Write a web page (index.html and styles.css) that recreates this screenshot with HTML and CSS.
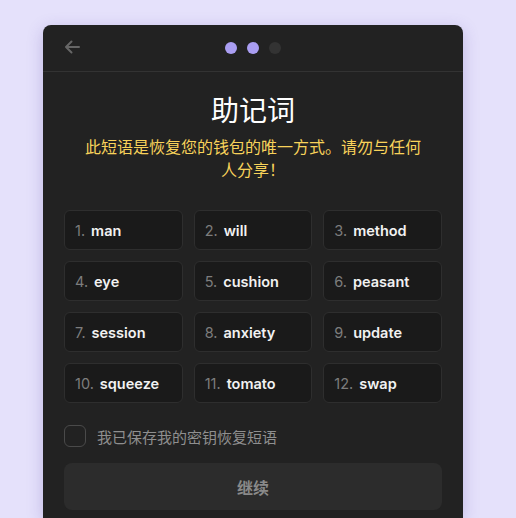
FILE: index.html
```html
<!DOCTYPE html>
<html lang="zh">
<head>
<meta charset="utf-8">
<link rel="stylesheet" href="styles.css">
</head>
<body>
<div class="card">
  <div class="header">
    <button class="back" aria-label="返回">
      <svg width="16" height="14" viewBox="0 0 16 14"><path d="M15 7H2M7.5 1.5L2 7l5.5 5.5" fill="none" stroke="#666" stroke-width="2" stroke-linecap="round" stroke-linejoin="round"/></svg>
    </button>
    <div class="dots">
      <span class="dot on"></span><span class="dot on"></span><span class="dot"></span>
    </div>
  </div>
  <div class="body">
    <h1 class="title">助记词</h1>
    <p class="subtitle">此短语是恢复您的钱包的唯一方式。请勿与任何人分享！</p>
    <div class="grid">
      <div class="word"><span class="num">1.</span><span class="txt">man</span></div>
      <div class="word"><span class="num">2.</span><span class="txt">will</span></div>
      <div class="word"><span class="num">3.</span><span class="txt">method</span></div>
      <div class="word"><span class="num">4.</span><span class="txt">eye</span></div>
      <div class="word"><span class="num">5.</span><span class="txt">cushion</span></div>
      <div class="word"><span class="num">6.</span><span class="txt">peasant</span></div>
      <div class="word"><span class="num">7.</span><span class="txt">session</span></div>
      <div class="word"><span class="num">8.</span><span class="txt">anxiety</span></div>
      <div class="word"><span class="num">9.</span><span class="txt">update</span></div>
      <div class="word"><span class="num">10.</span><span class="txt">squeeze</span></div>
      <div class="word"><span class="num">11.</span><span class="txt">tomato</span></div>
      <div class="word"><span class="num">12.</span><span class="txt">swap</span></div>
    </div>
    <label class="check"><span class="box"></span><span class="check-label">我已保存我的密钥恢复短语</span></label>
    <button class="continue">继续</button>
  </div>
</div>
</body>
</html>
```

FILE: styles.css
```css
* { box-sizing: border-box; }
html, body { margin: 0; padding: 0; }
body {
  background: #e5e1fb;
  font-family: Inter, "Noto Sans CJK SC", sans-serif;
  height: 518px;
  overflow: hidden;
}
.card {
  margin: 25px 0 0 43px;
  width: 420px;
  height: 493px;
  overflow: hidden;
  background: #222222;
  border-radius: 8px 8px 0 0;
  box-shadow: 0 4px 16px rgba(80, 60, 160, 0.25);
}
.header {
  height: 47px;
  border-bottom: 1px solid #333333;
  position: relative;
  display: flex;
  align-items: center;
  justify-content: center;
}
.back {
  position: absolute;
  left: 21px;
  top: 15px;
  background: none;
  border: 0;
  padding: 0;
  width: 16px;
  height: 14px;
  display: flex;
}
.dots { display: flex; gap: 10px; }
.dot { width: 12px; height: 12px; border-radius: 50%; background: #333333; }
.dot.on { background: #aa9ef2; }
.body { padding: 0 21px; }
.title {
  margin: 19px 0 0;
  text-align: center;
  color: #ffffff;
  font-family: "Noto Sans CJK SC", sans-serif;
  font-weight: 400;
  font-size: 28px;
  line-height: 36px;
}
.subtitle {
  margin: 8px 0 0;
  padding: 0 20px;
  text-align: center;
  color: #f8d25a;
  font-family: "Noto Sans CJK SC", sans-serif;
  font-size: 16px;
  line-height: 23px;
}
.grid {
  margin-top: 29px;
  display: grid;
  grid-template-columns: repeat(3, 1fr);
  column-gap: 11px;
  row-gap: 11px;
}
.word {
  height: 40px;
  background: #1a1a1a;
  border: 1px solid #2e2e2e;
  border-radius: 6px;
  display: flex;
  align-items: center;
  padding: 0 10px;
  font-size: 14.5px;
}
.num { color: #7d7d7d; margin-right: 6px; }
.txt { color: #f2f2f2; font-weight: 600; }
.check {
  margin-top: 22px;
  display: flex;
  align-items: center;
  gap: 11px;
}
.box {
  width: 22px;
  height: 22px;
  border: 1.5px solid #4a4a4a;
  border-radius: 6px;
}
.check-label {
  color: #8f8f8f;
  font-family: "Noto Sans CJK SC", sans-serif;
  font-size: 15px;
}
.continue {
  margin-top: 16px;
  width: 100%;
  height: 47px;
  border: 0;
  border-radius: 8px;
  background: #2c2c2c;
  color: #8a8a8a;
  font-family: "Noto Sans CJK SC", sans-serif;
  font-weight: 700;
  font-size: 16px;
}
```
